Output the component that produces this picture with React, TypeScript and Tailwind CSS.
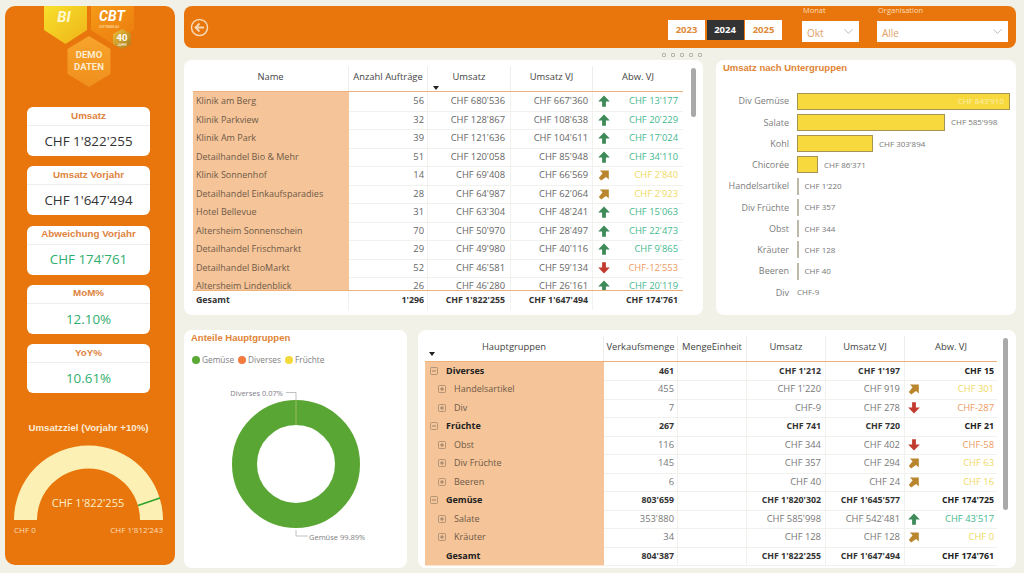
import { ChevronDown } from "lucide-react";

type Trend = "up" | "diag" | "down" | null;

const kpis = [
  { title: "Umsatz", value: "CHF 1'822'255", green: false },
  { title: "Umsatz Vorjahr", value: "CHF 1'647'494", green: false },
  { title: "Abweichung Vorjahr", value: "CHF 174'761", green: true },
  { title: "MoM%", value: "12.10%", green: true },
  { title: "YoY%", value: "10.61%", green: true },
];

const customers: [string, string, string, string, Trend, string][] = [
  ["Klinik am Berg", "56", "CHF 680'536", "CHF 667'360", "up", "CHF 13'177"],
  ["Klinik Parkview", "32", "CHF 128'867", "CHF 108'638", "up", "CHF 20'229"],
  ["Klinik Am Park", "39", "CHF 121'636", "CHF 104'611", "up", "CHF 17'024"],
  ["Detailhandel Bio & Mehr", "51", "CHF 120'058", "CHF 85'948", "up", "CHF 34'110"],
  ["Klinik Sonnenhof", "14", "CHF 69'408", "CHF 66'569", "diag", "CHF 2'840"],
  ["Detailhandel Einkaufsparadies", "28", "CHF 64'987", "CHF 62'064", "diag", "CHF 2'923"],
  ["Hotel Bellevue", "31", "CHF 63'304", "CHF 48'241", "up", "CHF 15'063"],
  ["Altersheim Sonnenschein", "70", "CHF 50'970", "CHF 28'497", "up", "CHF 22'473"],
  ["Detailhandel Frischmarkt", "29", "CHF 49'980", "CHF 40'116", "up", "CHF 9'865"],
  ["Detailhandel BioMarkt", "52", "CHF 46'581", "CHF 59'134", "down", "CHF-12'553"],
  ["Altersheim Lindenblick", "26", "CHF 46'280", "CHF 26'161", "up", "CHF 20'119"],
];

const bars = [
  { label: "Div Gemüse", value: "CHF 843'910", width: 213, inside: true },
  { label: "Salate", value: "CHF 585'998", width: 148 },
  { label: "Kohl", value: "CHF 303'894", width: 76 },
  { label: "Chicorée", value: "CHF 86'371", width: 21 },
  { label: "Handelsartikel", value: "CHF 1'220", width: 1 },
  { label: "Div Früchte", value: "CHF 357", width: 1 },
  { label: "Obst", value: "CHF 344", width: 1 },
  { label: "Kräuter", value: "CHF 128", width: 1 },
  { label: "Beeren", value: "CHF 40", width: 1 },
  { label: "Div", value: "CHF-9", width: 0 },
];

type MatrixRow = {
  name: string;
  level: 0 | 1 | 2;
  qty: string;
  sales: string;
  prev: string;
  trend: Trend;
  diff: string;
};

const matrix: MatrixRow[] = [
  { name: "Diverses", level: 0, qty: "461", sales: "CHF 1'212", prev: "CHF 1'197", trend: null, diff: "CHF 15" },
  { name: "Handelsartikel", level: 1, qty: "455", sales: "CHF 1'220", prev: "CHF 919", trend: "diag", diff: "CHF 301" },
  { name: "Div", level: 1, qty: "7", sales: "CHF-9", prev: "CHF 278", trend: "down", diff: "CHF-287" },
  { name: "Früchte", level: 0, qty: "267", sales: "CHF 741", prev: "CHF 720", trend: null, diff: "CHF 21" },
  { name: "Obst", level: 1, qty: "116", sales: "CHF 344", prev: "CHF 402", trend: "down", diff: "CHF-58" },
  { name: "Div Früchte", level: 1, qty: "145", sales: "CHF 357", prev: "CHF 294", trend: "diag", diff: "CHF 63" },
  { name: "Beeren", level: 1, qty: "6", sales: "CHF 40", prev: "CHF 24", trend: "diag", diff: "CHF 16" },
  { name: "Gemüse", level: 0, qty: "803'659", sales: "CHF 1'820'302", prev: "CHF 1'645'577", trend: null, diff: "CHF 174'725" },
  { name: "Salate", level: 1, qty: "353'880", sales: "CHF 585'998", prev: "CHF 542'481", trend: "up", diff: "CHF 43'517" },
  { name: "Kräuter", level: 1, qty: "34", sales: "CHF 128", prev: "CHF 128", trend: "diag", diff: "CHF 0" },
  { name: "Gesamt", level: 2, qty: "804'387", sales: "CHF 1'822'255", prev: "CHF 1'647'494", trend: null, diff: "CHF 174'761" },
];

function TrendIcon({ trend }: { trend: Trend }) {
  if (trend === "up") {
    return (
      <svg width="12" height="12" viewBox="0 0 12 12" className="shrink-0">
        <path d="M6 0.5 L11.8 6.6 L7.9 6.6 L7.9 11.8 L4.1 11.8 L4.1 6.6 L0.2 6.6 Z" fill="#3E8A58" />
      </svg>
    );
  }
  if (trend === "down") {
    return (
      <svg width="12" height="12" viewBox="0 0 12 12" className="shrink-0">
        <path d="M6 11.5 L11.8 5.4 L7.9 5.4 L7.9 0.2 L4.1 0.2 L4.1 5.4 L0.2 5.4 Z" fill="#C23B2E" />
      </svg>
    );
  }
  if (trend === "diag") {
    return (
      <svg width="12" height="12" viewBox="0 0 12 12" className="shrink-0">
        <path d="M1.8 1.5 L10.8 1.5 L10.8 10.5 L8 8 L3.2 11.4 L0.8 9 L4.6 4.2 Z" fill="#B9862E" />
      </svg>
    );
  }
  return null;
}

function diffColor(trend: Trend) {
  if (trend === "up") return "text-[#45B98F]";
  if (trend === "diag") return "text-[#EFD95F]";
  if (trend === "down") return "text-[#EE9A60]";
  return "text-[#222]";
}

function HeaderCell({ label, className }: { label: string; className: string }) {
  return (
    <div className={`flex items-center justify-center border-r border-[#EEEEEA] pb-[2px] text-[#444] ${className}`}>{label}</div>
  );
}

function Caret({ className }: { className: string }) {
  return <div className={`absolute h-0 w-0 border-x-[3.5px] border-t-[4px] border-x-transparent border-t-[#222] ${className}`} />;
}

function Scrollbar({ className }: { className: string }) {
  return <div className={`absolute w-[5px] rounded-full bg-[#A9A9A9] ${className}`} />;
}

function Logo() {
  return (
    <svg width="170" height="95" viewBox="0 0 170 95" className="shrink-0">
      <defs>
        <linearGradient id="biFill" x1="0" y1="0" x2="1" y2="1">
          <stop offset="0" stopColor="#F7E02C" />
          <stop offset="1" stopColor="#EFB318" />
        </linearGradient>
        <linearGradient id="cbtFill" x1="0" y1="0" x2="1" y2="1">
          <stop offset="0" stopColor="#F59A16" />
          <stop offset="1" stopColor="#EC7A0E" />
        </linearGradient>
        <linearGradient id="demoFill" x1="0" y1="0" x2="0" y2="1">
          <stop offset="0" stopColor="#F7A42C" />
          <stop offset="1" stopColor="#F08F1C" />
        </linearGradient>
        <linearGradient id="badgeFill" x1="0" y1="0" x2="1" y2="1">
          <stop offset="0" stopColor="#EFC03A" />
          <stop offset="1" stopColor="#A9791F" />
        </linearGradient>
      </defs>
      <polygon points="39,0 82,0 82,24 60.5,38 39,24" fill="url(#biFill)" />
      <polygon points="86,0 129,0 129,24 107.5,38 86,24" fill="url(#cbtFill)" />
      <polygon points="84,30 105.5,43 105.5,68 84,81 62.5,68 62.5,43" fill="url(#demoFill)" />
      <polygon points="117,23 126,28 126,38 117,43 108,38 108,28" fill="url(#badgeFill)" />
      <text x="59" y="16" textAnchor="middle" fill="#FFF8D0" fontSize="15" fontWeight="700" fontStyle="italic" fontFamily="Roboto, sans-serif">
        BI
      </text>
      <text x="107" y="15" textAnchor="middle" fill="#FFFFFF" fontSize="14" fontWeight="700" fontStyle="italic" fontFamily="Roboto, sans-serif">
        CBT
      </text>
      <text x="104" y="22" textAnchor="middle" fill="#FFE9C8" fontSize="3" fontFamily="Roboto, sans-serif">
        SOFTWARE AG
      </text>
      <text x="117" y="35" textAnchor="middle" fill="#FFFFFF" fontSize="9.5" fontWeight="700" fontFamily="Roboto, sans-serif">
        40
      </text>
      <text x="117" y="39.5" textAnchor="middle" fill="#FFFFFF" fontSize="3" fontFamily="Roboto, sans-serif">
        JAHRE
      </text>
      <text x="84" y="52" textAnchor="middle" fill="#FDEBD0" fontSize="9.5" fontWeight="700" fontFamily="Roboto, sans-serif">
        DEMO
      </text>
      <text x="84" y="64" textAnchor="middle" fill="#FDEBD0" fontSize="9.5" fontWeight="700" fontFamily="Roboto, sans-serif">
        DATEN
      </text>
    </svg>
  );
}

function Kpi({ title, value, green }: { title: string; value: string; green: boolean }) {
  return (
    <div className="h-[49px] rounded-[6px] bg-white">
      <div className="flex h-[19px] items-center justify-center border-b border-[#EEEEEE] font-['Liberation_Sans',sans-serif] text-[9.8px] font-bold text-[#DE8340]">
        {title}
      </div>
      <div className={`flex h-[30px] items-center justify-center font-['Open_Sans',sans-serif] text-[13.4px] ${green ? "text-[#2FAE6E]" : "text-[#333]"}`}>
        {value}
      </div>
    </div>
  );
}

function Gauge() {
  return (
    <svg width="170" height="100" viewBox="0 0 170 100" className="mt-[2px] shrink-0">
      <path d="M9 84 A74.5 74.5 0 0 1 158 84 L135 84 A51.5 51.5 0 0 0 32 84 Z" fill="#FDF0B4" />
      <line x1="133" y1="69.5" x2="155" y2="62" stroke="#2BA32B" strokeWidth="1.5" />
      <text x="83" y="71" textAnchor="middle" fill="#FBEFC8" fontSize="11" fontFamily="'Open Sans', sans-serif">
        CHF 1'822'255
      </text>
      <text x="9" y="96.5" fill="#F8DDBA" fontSize="8" fontFamily="'Open Sans', sans-serif">
        CHF 0
      </text>
      <text x="158" y="96.5" textAnchor="end" fill="#F8DDBA" fontSize="8" fontFamily="'Open Sans', sans-serif">
        CHF 1'812'243
      </text>
    </svg>
  );
}

function Sidebar() {
  return (
    <aside className="flex h-[559px] w-[170px] shrink-0 flex-col overflow-hidden rounded-[10px] bg-[#E8760C]">
      <Logo />
      <div className="mt-[6px] flex flex-col gap-[10.25px] pr-[25px] pl-[22px]">
        {kpis.map((kpi) => (
          <Kpi key={kpi.title} {...kpi} />
        ))}
      </div>
      <div className="mt-[29px] pr-[3px] text-center font-['Liberation_Sans',sans-serif] text-[9.7px] leading-[12px] font-bold text-[#FCEBD4]">
        Umsatzziel (Vorjahr +10%)
      </div>
      <Gauge />
    </aside>
  );
}

function Dropdown({ label, value, className }: { label: string; value: string; className: string }) {
  return (
    <div className={`flex flex-col ${className}`}>
      <span className="ml-[1px] h-[15px] font-['Open_Sans',sans-serif] text-[7.5px] leading-[9px] text-[#FBDDBB]">{label}</span>
      <div className="flex h-[21px] items-center justify-between bg-white pr-[3px] pl-[5px] font-['Open_Sans',sans-serif] text-[10px] text-[#E0A068]">
        <span className="pt-[3px]">{value}</span>
        <ChevronDown size={15} strokeWidth={1} className="text-[#999]" />
      </div>
    </div>
  );
}

function TopBar() {
  const years = ["2023", "2024", "2025"];
  return (
    <header className="flex h-[42px] items-center rounded-[8px] bg-[#E8760C] pr-[8px] pl-[6px]">
      <svg width="19" height="19" viewBox="0 0 19 19" className="shrink-0">
        <circle cx="9.5" cy="9.5" r="8" fill="none" stroke="#F7D9B6" strokeWidth="1.5" />
        <path d="M14 9.5 H6 M9.5 5.5 L5.5 9.5 L9.5 13.5" fill="none" stroke="#F7D9B6" strokeWidth="1.8" />
      </svg>
      <div className="ml-[459px] flex gap-[1.5px] pt-[6px]">
        {years.map((year) => (
          <div
            key={year}
            className={`flex h-[20px] w-[37px] items-center justify-center font-['Open_Sans',sans-serif] text-[9.5px] font-bold ${
              year === "2024" ? "bg-[#333333] text-white" : "bg-white text-[#E08A3C]"
            }`}
          >
            {year}
          </div>
        ))}
      </div>
      <Dropdown label="Monat" value="Okt" className="mb-[6px] ml-[20px] w-[57px]" />
      <Dropdown label="Organisation" value="Alle" className="mb-[6px] ml-[18px] w-[131px]" />
    </header>
  );
}

function CustomerTable() {
  const cols = "grid grid-cols-[156px_79px_83px_82px_90px]";
  return (
    <section className="relative h-[255px] w-[519px] shrink-0 overflow-hidden rounded-[8px] bg-white pt-[6px] pl-[9px] font-['Open_Sans',sans-serif] text-[9.4px]">
      <div className={`${cols} h-[26px] w-[490px] border-b-[1.5px] border-[#EDB27C]`}>
        <HeaderCell label="Name" className="" />
        <HeaderCell label="Anzahl Aufträge" className="" />
        <HeaderCell label="Umsatz" className="" />
        <HeaderCell label="Umsatz VJ" className="" />
        <HeaderCell label="Abw. VJ" className="border-r-0" />
      </div>
      <Caret className="top-[26px] left-[249px]" />
      <div className="h-[199px] w-[490px] overflow-hidden border-b-[1.5px] border-[#EDB27C]">
        {customers.map(([name, count, sales, prev, trend, diff]) => (
          <div key={name} className={`${cols} h-[18.5px] leading-[18.5px] text-[#666]`}>
            <div className="border-b border-[#FBE3CE] bg-[#F5C498] pl-[3px] text-[9px] text-[#6F5A48]">{name}</div>
            <div className="border-r border-b border-[#F1F1EE] pr-[3px] text-right">{count}</div>
            <div className="border-r border-b border-[#F1F1EE] pr-[5px] text-right">{sales}</div>
            <div className="border-r border-b border-[#F1F1EE] pr-[4px] text-right">{prev}</div>
            <div className="flex items-center justify-between border-b border-[#F1F1EE] pr-[5px] pl-[5px]">
              <TrendIcon trend={trend} />
              <span className={diffColor(trend)}>{diff}</span>
            </div>
          </div>
        ))}
      </div>
      <div className={`${cols} h-[19px] w-[490px] text-[8.8px] leading-[19px] font-bold text-[#333]`}>
        <div className="border-r border-[#F1F1EE] pl-[3px]">Gesamt</div>
        <div className="border-r border-[#F1F1EE] pr-[3px] text-right">1'296</div>
        <div className="border-r border-[#F1F1EE] pr-[5px] text-right">CHF 1'822'255</div>
        <div className="border-r border-[#F1F1EE] pr-[4px] text-right">CHF 1'647'494</div>
        <div className="pr-[5px] text-right">CHF 174'761</div>
      </div>
      <Scrollbar className="top-[8px] left-[507px] h-[49px]" />
    </section>
  );
}

function BarChart() {
  return (
    <section className="h-[255px] w-[300px] shrink-0 rounded-[8px] bg-white pt-[2px] pl-[7px]">
      <h2 className="h-[12px] font-['Liberation_Sans',sans-serif] text-[9.5px] leading-[12px] font-bold text-[#E08436]">Umsatz nach Untergruppen</h2>
      <div className="mt-[16.5px] flex flex-col">
        {bars.map((bar) => (
          <div key={bar.label} className="flex h-[21.25px] items-center font-['Open_Sans',sans-serif]">
            <div className="w-[66px] shrink-0 text-right text-[9px] whitespace-nowrap text-[#7C7C7C]">{bar.label}</div>
            <div className="ml-[8px] flex items-center">
              {bar.width > 0 && (
                <div
                  className={`relative flex h-[17px] items-center justify-end ${bar.width > 1 ? "border border-[#A69455] bg-[#F7D93E]" : "bg-[#BDB8A8]"}`}
                  style={{ width: bar.width > 1 ? bar.width : 1.5 }}
                >
                  {bar.inside && <span className="pr-[5px] text-[8px] text-[#FCEFB0]">{bar.value}</span>}
                </div>
              )}
              {!bar.inside && (
                <span className={`text-[8px] text-[#777] ${bar.width === 0 ? "" : "ml-[6px]"}`}>{bar.value}</span>
              )}
            </div>
          </div>
        ))}
      </div>
    </section>
  );
}

function Donut() {
  const legend = [
    { label: "Gemüse", color: "bg-[#5AA835]" },
    { label: "Diverses", color: "bg-[#F47B3F]" },
    { label: "Früchte", color: "bg-[#F3D93A]" },
  ];
  return (
    <section className="h-[238px] w-[223px] shrink-0 rounded-[8px] bg-white pt-[2px] pl-[7px]">
      <h2 className="h-[12px] font-['Liberation_Sans',sans-serif] text-[9.5px] leading-[12px] font-bold text-[#E08436]">Anteile Hauptgruppen</h2>
      <div className="mt-[10px] flex h-[12px] items-center gap-[4px] pl-[1px] font-['Open_Sans',sans-serif] text-[8.3px] text-[#808080]">
        {legend.map((item) => (
          <span key={item.label} className="flex items-center gap-[2px]">
            <span className={`h-[8px] w-[8px] rounded-full ${item.color}`} />
            {item.label}
          </span>
        ))}
      </div>
      <svg width="216" height="190" viewBox="7 0 216 190" className="mt-[4px]">
        <circle cx="112" cy="94" r="51.5" fill="none" stroke="#5AA635" strokeWidth="25" />
        <line x1="112" y1="30" x2="112" y2="55" stroke="#A9C46A" strokeWidth="0.8" />
        <path d="M102 22.5 H112 V30 M112 160 V166 H124" fill="none" stroke="#A8A8A8" strokeWidth="0.7" />
        <text x="99" y="25.5" textAnchor="end" fill="#808088" fontSize="7.5" fontFamily="'Open Sans', sans-serif">
          Diverses 0.07%
        </text>
        <text x="125" y="170" fill="#808080" fontSize="7.5" fontFamily="'Open Sans', sans-serif">
          Gemüse 99.89%
        </text>
      </svg>
    </section>
  );
}

function ExpandBox({ open }: { open: boolean }) {
  return (
    <svg width="8" height="8" viewBox="0 0 8 8" className="shrink-0">
      <rect x="0.5" y="0.5" width="7" height="7" rx="1" fill="none" stroke="#9A8168" strokeWidth="0.7" />
      <path d={open ? "M2 4 H6" : "M2 4 H6 M4 2 V6"} stroke="#7D6853" strokeWidth="0.7" />
    </svg>
  );
}

function MatrixTable() {
  const cols = "grid grid-cols-[179px_74px_69px_79px_79px_92px]";
  return (
    <section className="relative h-[238px] w-[598px] shrink-0 overflow-hidden rounded-[8px] bg-white pt-[6px] pl-[7px] font-['Open_Sans',sans-serif] text-[9.4px]">
      <div className={`${cols} h-[25.5px] w-[572px] border-b-[1.5px] border-[#EDB27C]`}>
        <HeaderCell label="Hauptgruppen" className="" />
        <HeaderCell label="Verkaufsmenge" className="" />
        <HeaderCell label="MengeEinheit" className="" />
        <HeaderCell label="Umsatz" className="" />
        <HeaderCell label="Umsatz VJ" className="" />
        <HeaderCell label="Abw. VJ" className="border-r-0" />
      </div>
      <Caret className="top-[22px] left-[11px]" />
      {matrix.map((row) => {
        const bold = row.level !== 1;
        return (
          <div
            key={row.name}
            className={`${cols} h-[18.5px] w-[572px] leading-[18.5px] ${bold ? "text-[8.8px] font-bold text-[#333]" : "text-[#777]"}`}
          >
            <div className={`flex items-center border-b border-[#FBE3CE] bg-[#F5C498] ${bold ? "text-[9px] text-[#222]" : "text-[9px] text-[#6F5A48]"}`}>
              <div className={`flex items-center ${row.level === 1 ? "w-[29px] justify-end pr-[8px]" : "w-[21px] justify-end pr-[8px]"}`}>
                {row.level !== 2 && <ExpandBox open={row.level === 0} />}
              </div>
              {row.name}
            </div>
            <div className="border-r border-b border-[#F1F1EE] pr-[3px] text-right">{row.qty}</div>
            <div className="border-r border-b border-[#F1F1EE]" />
            <div className="border-r border-b border-[#F1F1EE] pr-[4px] text-right">{row.sales}</div>
            <div className="border-r border-b border-[#F1F1EE] pr-[4px] text-right">{row.prev}</div>
            <div className="flex items-center justify-between border-b border-[#F1F1EE] pr-[3px] pl-[3px]">
              <TrendIcon trend={row.trend} />
              <span className={`ml-auto ${diffColor(row.trend)}`}>{row.diff}</span>
            </div>
          </div>
        );
      })}
      <Scrollbar className="top-[8px] left-[585px] h-[172px]" />
    </section>
  );
}

function VisualToolbar() {
  return (
    <div className="absolute top-[47px] left-[478px] flex gap-[5px]">
      {[0, 1, 2, 3, 4].map((i) => (
        <span key={i} className="h-[4px] w-[4px] rounded-[1px] border-[0.5px] border-[#B5B5AD]" />
      ))}
    </div>
  );
}

export default function App() {
  return (
    <div className="flex h-[573px] w-[1024px] gap-[9px] overflow-hidden bg-[#F2F1E8] pt-[6px] pl-[5px]">
      <Sidebar />
      <main className="relative flex w-[832px] shrink-0 flex-col">
        <TopBar />
        <VisualToolbar />
        <div className="mt-[12px] flex gap-[13px]">
          <CustomerTable />
          <BarChart />
        </div>
        <div className="mt-[15px] flex gap-[11px]">
          <Donut />
          <MatrixTable />
        </div>
      </main>
    </div>
  );
}
